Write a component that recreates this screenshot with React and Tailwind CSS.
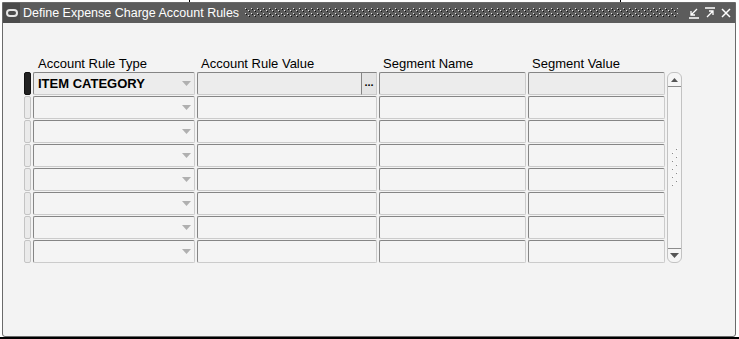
import React from 'react';

const rows = [
  { type: 'ITEM CATEGORY', current: true },
  {}, {}, {}, {}, {}, {}, {},
];

function Field({ className = '', children, dark }) {
  return (
    <div
      className={`relative h-[23px] rounded-[2px] border border-t-[#858585] border-l-[#858585] border-b-[#cbcbcb] border-r-[#cbcbcb] ${dark ? 'bg-[#ececec]' : 'bg-[#f4f4f4]'} ${className}`}
    >
      {children}
    </div>
  );
}

function DropArrow() {
  return (
    <svg className="absolute right-[3px] top-[8px]" width="9" height="5" viewBox="0 0 9 5">
      <path d="M0 0h9L4.5 5z" fill="#b0b0b0" />
    </svg>
  );
}

function TitleDots() {
  return (
    <svg className="flex-1 h-[10px] ml-[6px] mr-[10px]" preserveAspectRatio="none">
      <defs>
        <pattern id="dots" width="6" height="5" patternUnits="userSpaceOnUse">
          <rect x="0" y="0" width="1" height="1" fill="#e6e6e6" />
          <rect x="1" y="1" width="1" height="1" fill="#111" />
          <rect x="3" y="2" width="1" height="1" fill="#e6e6e6" />
          <rect x="4" y="3" width="1" height="1" fill="#111" />
        </pattern>
      </defs>
      <rect width="100%" height="100%" fill="url(#dots)" />
    </svg>
  );
}

export default function App() {
  return (
    <div className="w-[739px] h-[339px] bg-white relative overflow-hidden font-['Liberation_Sans',Arial,sans-serif]">
      {/* stray lines behind the window */}
      <div className="absolute left-[189px] top-0 w-px h-[3px] bg-black" />
      <div className="absolute left-[620px] top-0 w-px h-[3px] bg-black" />
      <div className="absolute left-0 bottom-0 w-[739px] h-[2px] bg-black" />

      <div className="absolute left-[2px] top-[2px] w-[734px] h-[335px] bg-[#f3f3f3] border border-[#6a6a6a] rounded-b-[3px] flex flex-col">
        {/* title bar */}
        <div className="h-[20px] bg-[#5c5c5c] flex items-center text-white text-[12.5px] leading-none">
          <div className="w-[17px] h-[20px] bg-[#4b4b4b] flex items-center justify-center">
            <div className="w-[12px] h-[8px] rounded-full border-2 border-[#e6e6e6]" />
          </div>
          <span className="ml-[3px]">Define Expense Charge Account Rules</span>
          <TitleDots />
          <div className="flex items-center gap-[4px] mr-[3px]">
            <svg width="12" height="12" viewBox="0 0 12 12" stroke="#fff" strokeWidth="1.3" fill="none">
              <path d="M9 2L3 8M3 4v4h4M1 11h10" />
            </svg>
            <svg width="12" height="12" viewBox="0 0 12 12" stroke="#fff" strokeWidth="1.3" fill="none">
              <path d="M1 1h10M3 10l6-6M5 4h4v4" />
            </svg>
            <svg width="12" height="12" viewBox="0 0 12 12" stroke="#fff" strokeWidth="1.5" fill="none">
              <path d="M2 2l8 8M10 2l-8 8" />
            </svg>
          </div>
        </div>

        {/* body */}
        <div className="pl-[21px] pt-[33px]">
          <div className="flex text-[13px] leading-[15px] text-black h-[15px]">
            <div className="w-[10px]" />
            <div className="w-[164px] pl-[4px]">Account Rule Type</div>
            <div className="w-[182px] pl-[3px]">Account Rule Value</div>
            <div className="w-[149px] pl-[3px]">Segment Name</div>
            <div className="pl-[3px]">Segment Value</div>
          </div>

          <div className="flex mt-[1px]">
            <div className="flex flex-col gap-[1px]">
              {rows.map((r, i) => (
                <div key={i} className="flex items-start gap-[2px]">
                  <div
                    className={`w-[7px] h-[23px] rounded-[2px] ${r.current ? 'bg-[#222] border border-[#111]' : 'bg-[#eaeaea] border border-[#c4c4c4]'}`}
                  />
                  <Field className="w-[162px]" dark={r.current}>
                    {r.type && (
                      <span className="absolute left-[4px] top-[3px] text-[13px] leading-[15px] font-bold text-black">
                        {r.type}
                      </span>
                    )}
                    <DropArrow />
                  </Field>
                  <Field className="w-[180px]" dark={r.current}>
                    {r.current && (
                      <div className="absolute right-[-1px] top-[-1px] w-[16px] h-[23px] bg-[#e4e4e4] border border-t-[#858585] border-l-[#858585] border-b-[#cbcbcb] border-r-[#cbcbcb] flex items-center justify-center text-[11px] font-bold leading-none pb-[3px]">
                        ...
                      </div>
                    )}
                  </Field>
                  <Field className="w-[147px]" dark={r.current} />
                  <Field className="w-[137px]" dark={r.current} />
                </div>
              ))}
            </div>

            {/* scrollbar */}
            <div className="ml-[2px] w-[15px] h-[191px] rounded-[6px] border border-[#c2c2c2] bg-[#f5f5f5] flex flex-col items-center">
              <div className="h-[14px] w-full border-b border-[#8c8c8c] flex items-center justify-center">
                <svg width="7" height="4" viewBox="0 0 7 4"><path d="M0 4h7L3.5 0z" fill="#555" /></svg>
              </div>
              <div className="flex-1 flex items-center justify-center">
                <svg width="8" height="40" viewBox="0 0 8 40">
                  {[0, 8, 16, 24, 32].map((y) => (
                    <g key={y}>
                      <rect x="1" y={y + 5} width="1" height="1" fill="#8a8a8a" />
                      <rect x="2" y={y + 4} width="1" height="1" fill="#fff" />
                      <rect x="5" y={y + 1} width="1" height="1" fill="#8a8a8a" />
                      <rect x="6" y={y} width="1" height="1" fill="#fff" />
                    </g>
                  ))}
                </svg>
              </div>
              <div className="h-[14px] w-full border-t border-[#8c8c8c] flex items-center justify-center">
                <svg width="9" height="5" viewBox="0 0 9 5"><path d="M0 0h9L4.5 5z" fill="#555" /></svg>
              </div>
            </div>
          </div>
        </div>
      </div>
    </div>
  );
}
